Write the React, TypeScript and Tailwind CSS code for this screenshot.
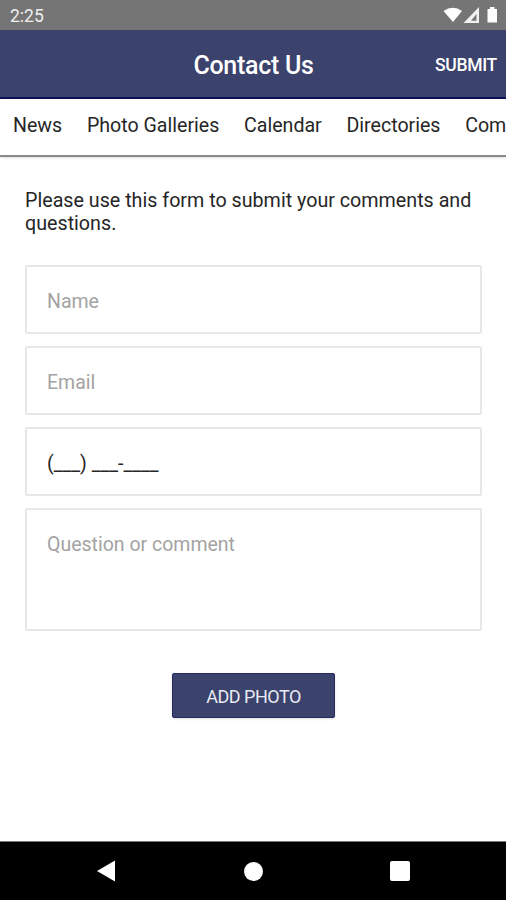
const tabs = ["News", "Photo Galleries", "Calendar", "Directories", "Com"];

function StatusBar() {
  return (
    <div className="flex h-[30px] items-center justify-between bg-[#757575] pl-[10px] pr-[6px] text-[#f0f0f0]">
      <span className="pt-[3px] text-[17.5px] leading-none">2:25</span>
      {/* wifi, signal, battery */}
      <svg width="57" height="18" viewBox="0 0 57 18" fill="#fff">
        <path d="M0.5 5Q10 -1.5 19 5L10 16z" />
        <path fillRule="evenodd" d="M36 1V17H20.5zM33.500 8L28 14.700H33.500z" opacity="0.9" />
        <path d="M44.500 3H47V1H51.500V3H54V16.500H44.500z" />
      </svg>
    </div>
  );
}

function Field({ label }: { label: string }) {
  return (
    <input
      aria-label={label}
      placeholder={label}
      className="h-[69px] w-full rounded-[2px] border-2 border-[#e7e7e7] px-5 pt-[3px] text-[19.5px] text-[#222] outline-none placeholder:text-[#a3a3a3]"
    />
  );
}

export default function App() {
  return (
    <div className="flex h-[900px] w-[506px] flex-col overflow-hidden bg-white font-['Roboto',sans-serif] text-[#262626]">
      <StatusBar />
      <header className="grid h-[69px] grid-cols-[1fr_auto_1fr] items-center border-b-2 border-[#0f1160] bg-[#3b426c] text-white">
        <span />
        <h1 className="pl-px pt-[4px] text-[25px] font-medium leading-none tracking-[-0.3px]">Contact Us</h1>
        <button className="justify-self-end pr-[9px] pt-[4px] text-[17.5px] font-medium tracking-[-0.3px]">SUBMIT</button>
      </header>
      <nav className="flex h-[58px] shrink-0 items-center gap-[24.7px] overflow-hidden whitespace-nowrap border-b-2 border-[#8a8a8a] pb-[2px] pl-[13px] text-[19.6px] shadow-sm">
        {tabs.map((tab) => (
          <a key={tab} className="shrink-0">{tab}</a>
        ))}
      </nav>
      <main className="flex grow flex-col pl-[25px] pr-[24px] pt-[32px]">
        <p className="text-[19.7px] leading-[23px]">
          Please use this form to submit your comments and questions.
        </p>
        <form className="mt-[30px] flex flex-col gap-3">
          <Field label="Name" />
          <Field label="Email" />
          <input
            aria-label="Phone"
            defaultValue="(___) ___-____"
            className="h-[69px] w-full rounded-[2px] border-2 border-[#e7e7e7] px-5 pt-[3px] text-[19.5px] outline-none"
          />
          <textarea
            aria-label="Question or comment"
            placeholder="Question or comment"
            className="h-[123px] w-full resize-none rounded-[2px] border-2 border-[#e7e7e7] px-5 pt-[20px] text-[19.5px] outline-none placeholder:text-[#a3a3a3]"
          />
        </form>
        <button className="mt-[42px] h-[45px] w-[163px] self-center rounded-[2px] border border-[#24295f] bg-[#3b426c] pt-[2px] text-[18px] tracking-[-0.5px] text-[#e8eaf2] shadow">
          ADD PHOTO
        </button>
      </main>
      <footer className="flex h-[59px] items-center justify-between border-t border-[#777] bg-black px-[96px]">
        <svg width="20" height="22" viewBox="0 0 20 22" fill="#fff"><path d="M19 0.500V21.500L1 11z" /></svg>
        <span className="size-[19px] rounded-full bg-white" />
        <span className="size-[20px] rounded-[2px] bg-white" />
      </footer>
    </div>
  );
}
